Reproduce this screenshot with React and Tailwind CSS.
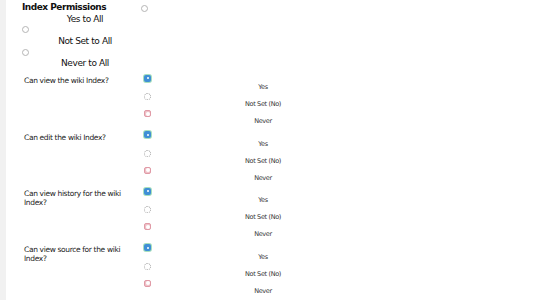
import React from "react";

const font = { fontFamily: '"DejaVu Sans", Verdana, sans-serif' };

function PlainRadio() {
  return <div className="w-[7px] h-[7px] rounded-full border border-[#b5b5b5] bg-white" />;
}

function CheckedRadio() {
  return (
    <div className="w-[7px] h-[7px] rounded-[2px] bg-[#3f8fd6] ring-1 ring-[#a8e0bd] flex items-center justify-center">
      <div className="w-[2px] h-[2px] rounded-full bg-white" />
    </div>
  );
}

function DottedRadio() {
  return <div className="w-[7px] h-[7px] rounded-full border border-dotted border-[#a9a9a9] bg-white" />;
}

function RedRadio() {
  return (
    <div className="w-[7px] h-[7px] rounded-[2px] bg-[#efc1c8] border border-[#e09aa6] flex items-center justify-center">
      <div className="w-[4px] h-[4px] rounded-full bg-white" />
    </div>
  );
}

const perms = [
  "Can view the wiki Index?",
  "Can edit the wiki Index?",
  "Can view history for the wiki Index?",
  "Can view source for the wiki Index?",
];

function PermRow({ label }) {
  return (
    <div className="flex h-[57.4px]">
      <div className="w-[122px] pl-[2px] pr-[4px] text-[7.5px] tracking-[-0.35px] leading-[9px] text-[#222] pt-[2px]">{label}</div>
      <div className="w-[238px] flex flex-col text-[6.5px] tracking-[-0.35px] text-[#333]">
        <div className="h-[8.5px] flex items-center"><CheckedRadio /></div>
        <div className="h-[8.5px] flex items-center justify-center pt-[3px]">Yes</div>
        <div className="h-[8.5px] flex items-center pt-[3px]"><DottedRadio /></div>
        <div className="h-[8.5px] flex items-center justify-center pt-[3px]">Not Set (No)</div>
        <div className="h-[8.5px] flex items-center pt-[3px]"><RedRadio /></div>
        <div className="h-[8.5px] flex items-center justify-center pt-[3px]">Never</div>
      </div>
    </div>
  );
}

export default function App() {
  return (
    <div className="w-[535px] h-[300px] bg-white flex overflow-hidden" style={font}>
      <div className="w-[6px] h-full bg-[#f1f1f1]" />
      <div className="flex flex-col pl-[16px]">
        <div className="flex items-start pt-[2px] h-[13px]">
          <div className="w-[119px] text-[9px] font-bold tracking-[-0.5px] leading-[11px] text-[#111]">Index Permissions</div>
          <div className="pt-[3px]"><PlainRadio /></div>
        </div>
        <div className="w-[126px] pt-[1px] text-center text-[9px] tracking-[-0.4px] leading-[10px] text-[#111]">Yes to All</div>
        <div className="h-[12px] flex items-center"><PlainRadio /></div>
        <div className="w-[126px] text-center text-[9px] tracking-[-0.4px] leading-[10px] text-[#111]">Not Set to All</div>
        <div className="h-[12px] flex items-center pt-[1px]"><PlainRadio /></div>
        <div className="w-[126px] text-center text-[9px] tracking-[-0.4px] leading-[10px] text-[#111]">Never to All</div>
        <div className="h-[6.5px]" />
        {perms.map((p) => (
          <PermRow key={p} label={p} />
        ))}
      </div>
    </div>
  );
}
